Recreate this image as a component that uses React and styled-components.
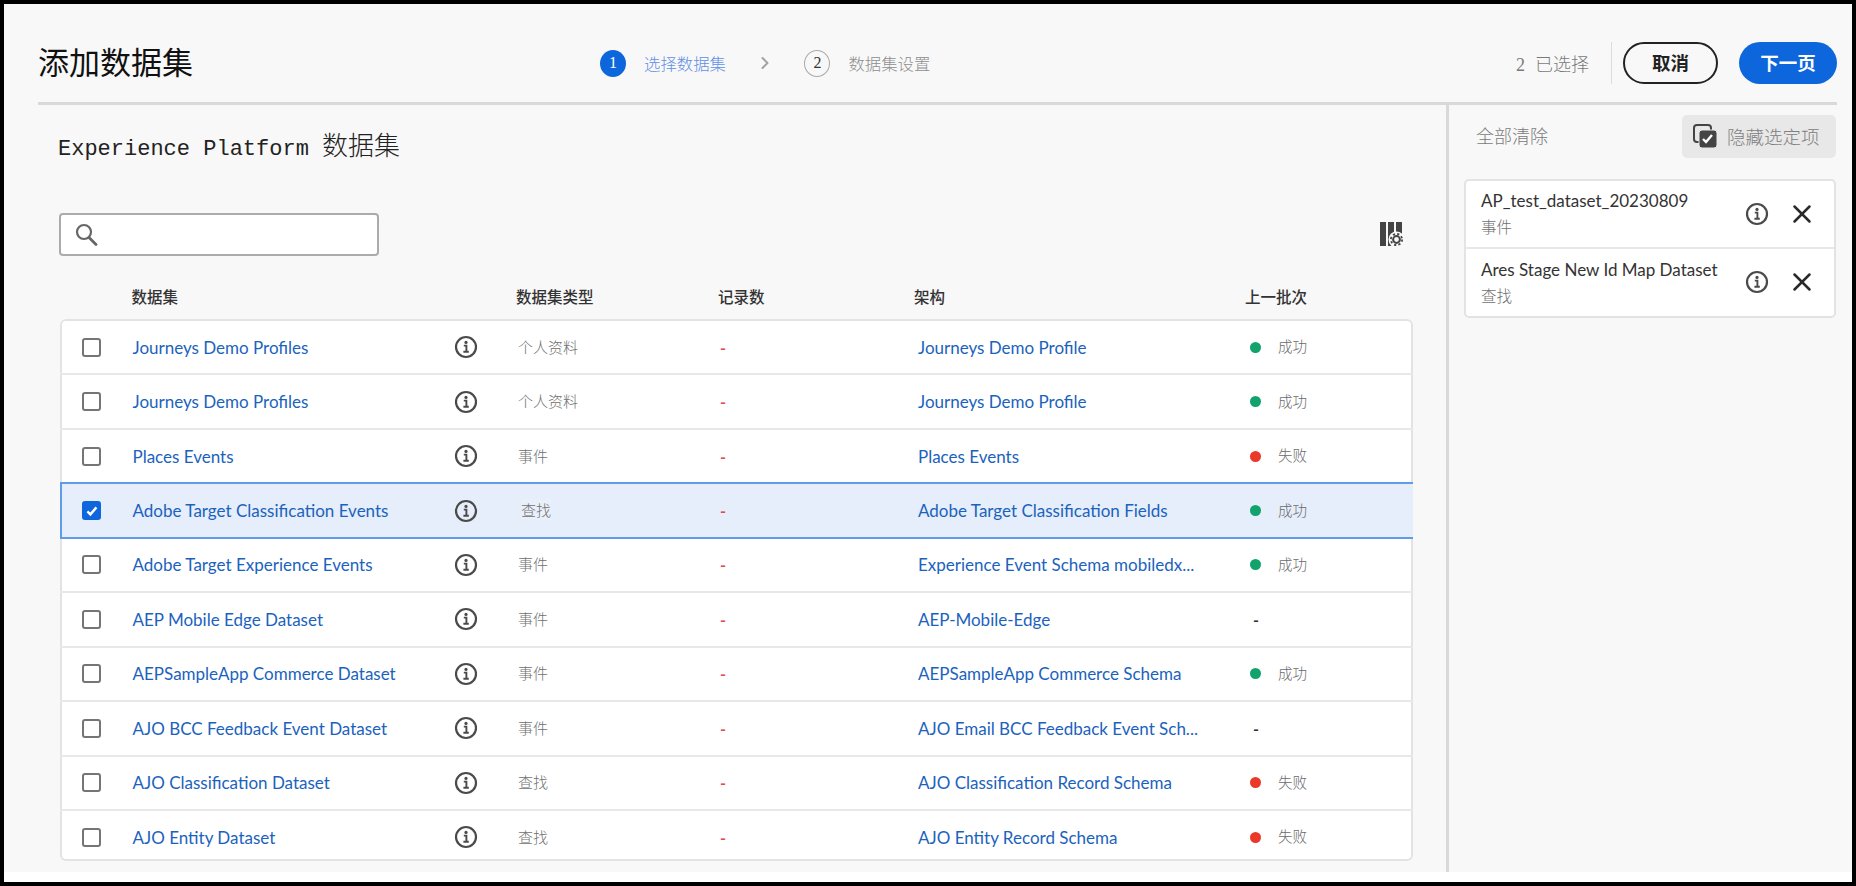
import styled, { createGlobalStyle } from "styled-components";
import { ChevronRight, X } from "lucide-react";

const CJK = `"Noto Sans CJK SC", sans-serif`;
const LATIN = `Lato, "Noto Sans CJK SC", sans-serif`;
const ROW_COLUMNS = "50.5px 321.5px 64px 202px 198px 332px 1fr";
const HEAD_COLUMNS = "50.5px 322.5px 62px 202px 196px 331px 1fr";

const GlobalStyle = createGlobalStyle`
  html, body {
    margin: 0;
    padding: 0;
    background: #000;
  }
  * {
    box-sizing: border-box;
  }
`;

const Frame = styled.div`
  width: 1856px;
  height: 886px;
  padding: 4px 4px 4px 4px;
  background: #000;
  overflow: hidden;
`;

const Page = styled.div`
  height: 878px;
  display: flex;
  flex-direction: column;
  background: #f8f8f8;
  border-bottom: 10px solid #fff;
  font-family: ${CJK};
`;

const TopBar = styled.header`
  flex: none;
  height: 101px;
  margin: 0 15px 0 34px;
  display: flex;
  align-items: center;
  padding-top: 20px;
  border-bottom: 3px solid #d9d9d9;
`;

const Title = styled.h1`
  width: 562px;
  margin: 0 0 4px;
  font-size: 31px;
  font-weight: 400;
  color: #111;
  line-height: 40px;
`;

const Stepper = styled.div`
  display: flex;
  align-items: center;
`;

const StepCircle = styled.span`
  width: 26px;
  height: 27px;
  display: flex;
  align-items: center;
  justify-content: center;
  border-radius: 50%;
  font-family: "Liberation Serif", serif;
  font-size: 16px;
  color: ${(props) => (props.$active ? "#fff" : "#333")};
  background: ${(props) => (props.$active ? "#0d66dc" : "transparent")};
  border: ${(props) => (props.$active ? "none" : "1.5px solid #aaa")};
`;

const StepLabel = styled.span`
  margin-left: 18px;
  font-size: 16.4px;
  font-weight: 300;
  color: ${(props) => (props.$active ? "#5f8fe6" : "#8e8e8e")};
`;

const StepArrow = styled.span`
  display: flex;
  margin: 0 29px 0 29.5px;
  color: #a3a3a3;
`;

const Actions = styled.div`
  margin-left: auto;
  display: flex;
  align-items: center;
`;

const SelectedCount = styled.span`
  font-size: 18px;
  font-weight: 300;
  color: #7a7a7a;
  word-spacing: 6px;
  padding-right: 22px;
  height: 42px;
  line-height: 42px;
  border-right: 1px solid #dcdcdc;
  & b {
    font-family: "Liberation Serif", serif;
    font-weight: 400;
  }
`;

const PillButton = styled.button`
  height: 42px;
  width: ${(props) => (props.$primary ? "98px" : "95px")};
  margin-left: ${(props) => (props.$primary ? "21px" : "11px")};
  border-radius: 21px;
  font-family: ${CJK};
  font-size: 18.5px;
  font-weight: 700;
  padding: 0 0 2px;
  color: ${(props) => (props.$primary ? "#fff" : "#222")};
  background: ${(props) => (props.$primary ? "#0d66dc" : "transparent")};
  border: ${(props) => (props.$primary ? "none" : "2px solid #222")};
`;

const Body = styled.div`
  flex: 1;
  min-height: 0;
  display: flex;
`;

const DatasetSection = styled.section`
  flex: none;
  width: 1445px;
  padding: 24px 33px 0 55px;
  border-right: 3px solid #d9d9d9;
`;

const SectionTitle = styled.h2`
  margin: 0 0 0 -1px;
  font-family: "Liberation Mono", ${CJK};
  font-size: 22px;
  font-weight: 400;
  line-height: 30px;
  color: #222;
  & span {
    font-family: ${CJK};
    font-size: 26px;
    font-weight: 300;
  }
`;

const Toolbar = styled.div`
  margin-top: 48px;
  display: flex;
  align-items: center;
  justify-content: space-between;
  padding-right: 9px;
`;

const SearchBox = styled.div`
  width: 320px;
  height: 43px;
  display: flex;
  align-items: center;
  padding-left: 14px;
  background: #fff;
  border: 2px solid #ababab;
  border-radius: 4px;
`;

const TableHead = styled.div`
  height: 42px;
  margin-top: 21px;
  padding: 0 0 4px 22px;
  display: grid;
  grid-template-columns: ${HEAD_COLUMNS};
  align-items: center;
  font-size: 15.5px;
  font-weight: 500;
  color: #333;
`;

const Table = styled.div`
  margin-left: 1px;
  height: 542px;
  padding-top: 2px;
  overflow: hidden;
  background: #fff;
  border-radius: 6px;
  box-shadow: inset 0 0 0 2px #e3e3e3;
`;

const Row = styled.div`
  height: 54.45px;
  padding-left: 22px;
  display: grid;
  grid-template-columns: ${ROW_COLUMNS};
  align-items: center;
  border-bottom: 2px solid ${(props) => (props.$selected ? "#5f9ce8" : "#e8e8e8")};
  background: ${(props) => (props.$selected ? "#e5eefa" : "transparent")};
  box-shadow: ${(props) =>
    props.$selected ? "inset 2px 0 0 #5f9ce8, 0 -2px 0 #5f9ce8" : "none"};
  position: relative;
`;

const Checkbox = styled.span`
  width: 19px;
  height: 19px;
  display: flex;
  align-items: center;
  justify-content: center;
  border-radius: 3px;
  background: ${(props) => (props.$checked ? "#0d66dc" : "#fff")};
  border: ${(props) => (props.$checked ? "none" : "2.5px solid #757575")};
`;

const NameLink = styled.a`
  font-family: ${LATIN};
  font-size: 17px;
  color: #1b62bd;
  white-space: nowrap;
`;

const TypeText = styled.span`
  font-size: 15px;
  font-weight: 300;
  color: #6f6f6f;
  margin-top: -2px;
  ${(props) =>
    props.$tinted &&
    `
    margin-left: 3px;
    width: fit-content;
    background: #e9f0fa;
  `}
`;

const EmptyRecord = styled.span`
  font-family: ${LATIN};
  font-size: 16px;
  font-weight: 700;
  color: #e34850;
`;

const Status = styled.span`
  display: flex;
  align-items: center;
  gap: 17px;
  font-size: 14.5px;
  font-weight: 300;
  color: #6a6a6a;
`;

const StatusLabel = styled.span`
  margin-top: -3px;
`;

const Dot = styled.i`
  width: 11px;
  height: 11px;
  border-radius: 50%;
  background: ${(props) => (props.$failed ? "#ea3829" : "#12a26c")};
`;

const Dash = styled.span`
  font-family: ${LATIN};
  font-size: 16px;
  font-weight: 700;
  color: #333;
  padding-left: 3px;
`;

const SidePanel = styled.aside`
  flex: 1;
  padding: 10px 16px 0 15px;
`;

const SideTop = styled.div`
  display: flex;
  align-items: center;
  justify-content: space-between;
`;

const ClearAll = styled.span`
  margin: -3px 0 0 12px;
  font-size: 18px;
  font-weight: 300;
  color: #7a7a7a;
`;

const HideButton = styled.button`
  width: 154px;
  height: 43px;
  display: flex;
  align-items: center;
  gap: 10px;
  padding: 0 0 2px 11px;
  border: none;
  border-radius: 5px;
  background: #e8e8e8;
  font-family: ${CJK};
  font-size: 18.5px;
  font-weight: 300;
  color: #808080;
  white-space: nowrap;
`;

const SelectedCard = styled.div`
  margin-top: 21px;
  background: #fff;
  border: 2px solid #e3e3e3;
  border-radius: 5px;
`;

const SelectedItem = styled.div`
  height: 67.5px;
  display: flex;
  align-items: center;
  padding: 0 17px 0 15px;
  &:not(:last-child) {
    border-bottom: 2px solid #e8e8e8;
  }
`;

const ItemText = styled.div`
  flex: 1;
  display: flex;
  flex-direction: column;
  gap: 3px;
`;

const ItemName = styled.span`
  font-family: ${LATIN};
  font-size: 17px;
  line-height: 22px;
  color: #333;
`;

const ItemType = styled.span`
  font-size: 15.5px;
  line-height: 22px;
  font-weight: 300;
  color: #707070;
`;

const CloseIcon = styled(X)`
  margin-left: 18px;
  color: #2a2a2a;
`;

function SearchIcon() {
  return (
    <svg width="23" height="23" viewBox="0 0 23 23" fill="none" stroke="#666">
      <circle cx="9" cy="9" r="7" strokeWidth="2.2" />
      <path d="M14 14.5l7 7" strokeWidth="2.8" strokeLinecap="round" />
    </svg>
  );
}

function InfoIcon() {
  return (
    <svg width="24" height="24" viewBox="0 0 24 24" fill="none" stroke="#4a4a4a">
      <circle cx="12" cy="12" r="10" strokeWidth="2.2" />
      <circle cx="12" cy="7.4" r="1.6" fill="#4a4a4a" stroke="none" />
      <path d="M9.8 10.6h2.6v6M9.4 16.8h5.4" strokeWidth="1.9" />
    </svg>
  );
}

function CheckMark() {
  return (
    <svg width="14" height="14" viewBox="0 0 14 14" fill="none">
      <path d="M2.4 7.4l3 3 6-7" stroke="#fff" strokeWidth="2.4" />
    </svg>
  );
}

function ColumnSettingsIcon() {
  return (
    <svg width="24" height="25" viewBox="0 0 24 25" fill="none">
      <rect x="0" y="0" width="6" height="24" fill="#444" />
      <rect x="8" y="0" width="6" height="24" fill="#444" />
      <rect x="16" y="0" width="6" height="12" fill="#444" />
      <circle cx="16.5" cy="17.5" r="8" fill="#f8f8f8" />
      <circle cx="16.5" cy="17.5" r="3.4" stroke="#444" strokeWidth="2" />
      <circle cx="16.5" cy="17.5" r="5.6" stroke="#444" strokeWidth="1.8" strokeDasharray="2.2 2.2" />
    </svg>
  );
}

function HideSelectedIcon() {
  return (
    <svg width="24" height="24" viewBox="0 0 24 24" fill="none">
      <rect x="1" y="1" width="17" height="17" rx="3" stroke="#444" strokeWidth="2" />
      <rect x="6" y="6" width="18" height="18" rx="3" fill="#444" stroke="#e8e8e8" strokeWidth="1" />
      <path d="M10 15l3 3 6-7" stroke="#fff" strokeWidth="2.4" />
    </svg>
  );
}

const datasets = [
  { name: "Journeys Demo Profiles", type: "个人资料", schema: "Journeys Demo Profile", status: "ok" },
  { name: "Journeys Demo Profiles", type: "个人资料", schema: "Journeys Demo Profile", status: "ok" },
  { name: "Places Events", type: "事件", schema: "Places Events", status: "failed" },
  { name: "Adobe Target Classification Events", type: "查找", schema: "Adobe Target Classification Fields", status: "ok", selected: true },
  { name: "Adobe Target Experience Events", type: "事件", schema: "Experience Event Schema mobiledx...", status: "ok" },
  { name: "AEP Mobile Edge Dataset", type: "事件", schema: "AEP-Mobile-Edge" },
  { name: "AEPSampleApp Commerce Dataset", type: "事件", schema: "AEPSampleApp Commerce Schema", status: "ok" },
  { name: "AJO BCC Feedback Event Dataset", type: "事件", schema: "AJO Email BCC Feedback Event Sch..." },
  { name: "AJO Classification Dataset", type: "查找", schema: "AJO Classification Record Schema", status: "failed" },
  { name: "AJO Entity Dataset", type: "查找", schema: "AJO Entity Record Schema", status: "failed" },
];

const selectedItems = [
  { name: "AP_test_dataset_20230809", type: "事件" },
  { name: "Ares Stage New Id Map Dataset", type: "查找" },
];

function StatusCell({ status }) {
  if (!status) return <Dash>-</Dash>;
  const failed = status === "failed";
  return (
    <Status>
      <Dot $failed={failed} />
      <StatusLabel>{failed ? "失败" : "成功"}</StatusLabel>
    </Status>
  );
}

export default function App() {
  return (
    <Frame>
      <GlobalStyle />
      <Page>
        <TopBar>
          <Title>添加数据集</Title>
          <Stepper>
            <StepCircle $active>1</StepCircle>
            <StepLabel $active>选择数据集</StepLabel>
            <StepArrow>
              <ChevronRight size={20} strokeWidth={2.4} />
            </StepArrow>
            <StepCircle>2</StepCircle>
            <StepLabel>数据集设置</StepLabel>
          </Stepper>
          <Actions>
            <SelectedCount>
              <b>2</b> 已选择
            </SelectedCount>
            <PillButton>取消</PillButton>
            <PillButton $primary>下一页</PillButton>
          </Actions>
        </TopBar>
        <Body>
          <DatasetSection>
            <SectionTitle>
              Experience Platform <span>数据集</span>
            </SectionTitle>
            <Toolbar>
              <SearchBox>
                <SearchIcon />
              </SearchBox>
              <ColumnSettingsIcon />
            </Toolbar>
            <TableHead>
              <span />
              <span>数据集</span>
              <span />
              <span>数据集类型</span>
              <span>记录数</span>
              <span>架构</span>
              <span>上一批次</span>
            </TableHead>
            <Table>
              {datasets.map((d, i) => (
                <Row key={i} $selected={d.selected}>
                  <Checkbox $checked={d.selected}>{d.selected && <CheckMark />}</Checkbox>
                  <NameLink>{d.name}</NameLink>
                  <InfoIcon />
                  <TypeText $tinted={d.selected}>{d.type}</TypeText>
                  <EmptyRecord>-</EmptyRecord>
                  <NameLink>{d.schema}</NameLink>
                  <StatusCell status={d.status} />
                </Row>
              ))}
            </Table>
          </DatasetSection>
          <SidePanel>
            <SideTop>
              <ClearAll>全部清除</ClearAll>
              <HideButton>
                <HideSelectedIcon />
                隐藏选定项
              </HideButton>
            </SideTop>
            <SelectedCard>
              {selectedItems.map((item) => (
                <SelectedItem key={item.name}>
                  <ItemText>
                    <ItemName>{item.name}</ItemName>
                    <ItemType>{item.type}</ItemType>
                  </ItemText>
                  <InfoIcon />
                  <CloseIcon size={30} strokeWidth={2} />
                </SelectedItem>
              ))}
            </SelectedCard>
          </SidePanel>
        </Body>
      </Page>
    </Frame>
  );
}
